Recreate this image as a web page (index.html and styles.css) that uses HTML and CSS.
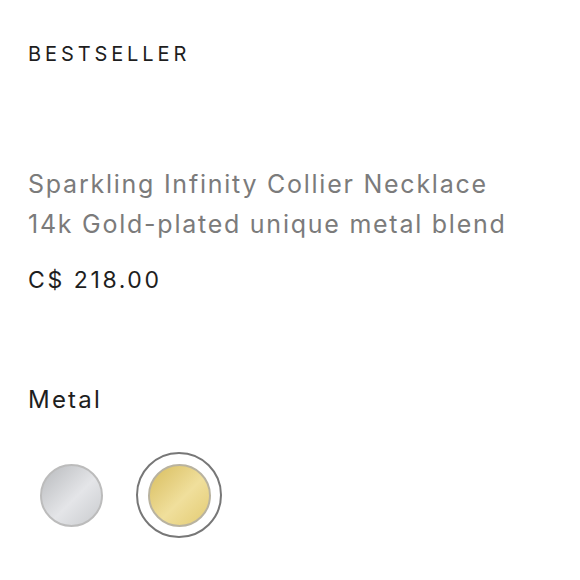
FILE: index.html
```html
<!DOCTYPE html>
<html lang="en">
<head>
<meta charset="utf-8">
<title>Sparkling Infinity Collier Necklace</title>
<link rel="stylesheet" href="styles.css">
</head>
<body>
<main class="product">
  <p class="badge">BESTSELLER</p>
  <h1 class="title">Sparkling Infinity Collier Necklace<br>14k Gold-plated unique metal blend</h1>
  <p class="price">C$ 218.00</p>
  <h2 class="label">Metal</h2>
  <div class="swatches">
    <button class="swatch" aria-label="Silver"><span class="dot silver"></span></button>
    <button class="swatch selected" aria-label="Gold"><span class="dot gold"></span></button>
  </div>
</main>
</body>
</html>
```
FILE: styles.css
```css
* { box-sizing: border-box; }
html, body { margin: 0; background: #fff; }
body { font-family: Inter, "Liberation Sans", sans-serif; color: #1e1e1e; }
.product { padding: 42px 28px; }
.badge {
  margin: 0;
  font-size: 20px;
  line-height: 24px;
  letter-spacing: 3.9px;
  font-weight: 400;
}
.title {
  margin: 98px 0 0;
  font-size: 25px;
  line-height: 40px;
  font-weight: 400;
  letter-spacing: 1.75px;
  color: #7b7b7b;
}
.price {
  margin: 21px 0 0;
  font-size: 23px;
  line-height: 30px;
  letter-spacing: 2.6px;
}
.label {
  margin: 90px 0 0;
  font-size: 24px;
  line-height: 30px;
  font-weight: 400;
  letter-spacing: 2.2px;
}
.swatches {
  margin-top: 37px;
  display: flex;
  gap: 22px;
}
.swatch {
  width: 86px;
  height: 86px;
  border-radius: 50%;
  border: 2px solid transparent;
  background: none;
  padding: 0;
  display: flex;
  align-items: center;
  justify-content: center;
}
.swatch.selected { border-color: #777; }
.dot {
  width: 63px;
  height: 63px;
  border-radius: 50%;
  border: 2px solid #bcbcbc;
}
.silver { background: linear-gradient(135deg, #b8babd 0%, #e4e5e8 55%, #c9cbce 100%); }
.gold { background: linear-gradient(135deg, #d8bd5e 0%, #f0df9c 55%, #e3cb72 100%); border-color: #b9b3a0; }
```
